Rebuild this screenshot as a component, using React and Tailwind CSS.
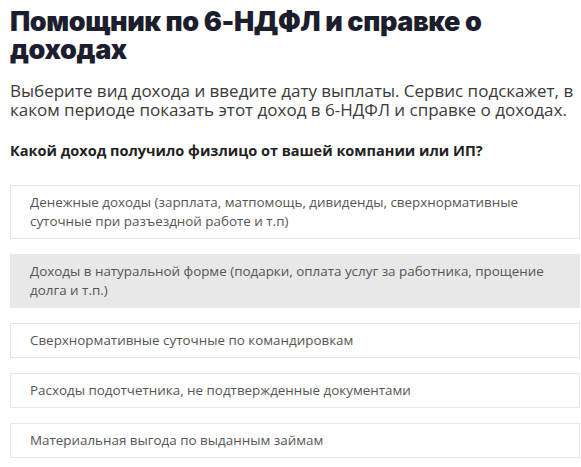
import React, { useState } from 'react';

const incomeTypes = [
  'Денежные доходы (зарплата, матпомощь, дивиденды, сверхнормативные суточные при разъездной работе и т.п)',
  'Доходы в натуральной форме (подарки, оплата услуг за работника, прощение долга и т.п.)',
  'Сверхнормативные суточные по командировкам',
  'Расходы подотчетника, не подтвержденные документами',
  'Материальная выгода по выданным займам',
];

export default function App() {
  const [hovered, setHovered] = useState(1);

  return (
    <div className="bg-white min-h-[467px] pl-[10px] pt-[8px] font-['Open_Sans',sans-serif]">
      <h1 className="text-[27px] leading-[28px] font-black text-[#1c1e2e] tracking-[-0.4px] font-['Inter',sans-serif] w-[480px]">
        Помощник по 6-НДФЛ и справке о доходах
      </h1>
      <p className="mt-[17px] text-[17px] leading-[19px] text-[#3a3a3a] w-[572px]">
        Выберите вид дохода и введите дату выплаты. Сервис подскажет, в каком периоде показать этот доход в 6-НДФЛ и справке о доходах.
      </p>
      <h2 className="mt-[22px] text-[14.5px] leading-[20px] font-bold text-[#222]">
        Какой доход получило физлицо от вашей компании или ИП?
      </h2>
      <div className="mt-[24px] flex flex-col gap-[15px]">
        {incomeTypes.map((label, idx) => (
          <button
            key={idx}
            onMouseEnter={() => setHovered(idx)}
            className={`w-[570px] text-left border px-[19px] py-[7px] text-[13.4px] leading-[19px] text-[#555] ${
              hovered === idx ? 'bg-[#e8e8e8] border-[#e8e8e8]' : 'bg-white border-[#e6e6e6]'
            }`}
          >
            {label}
          </button>
        ))}
      </div>
    </div>
  );
}
